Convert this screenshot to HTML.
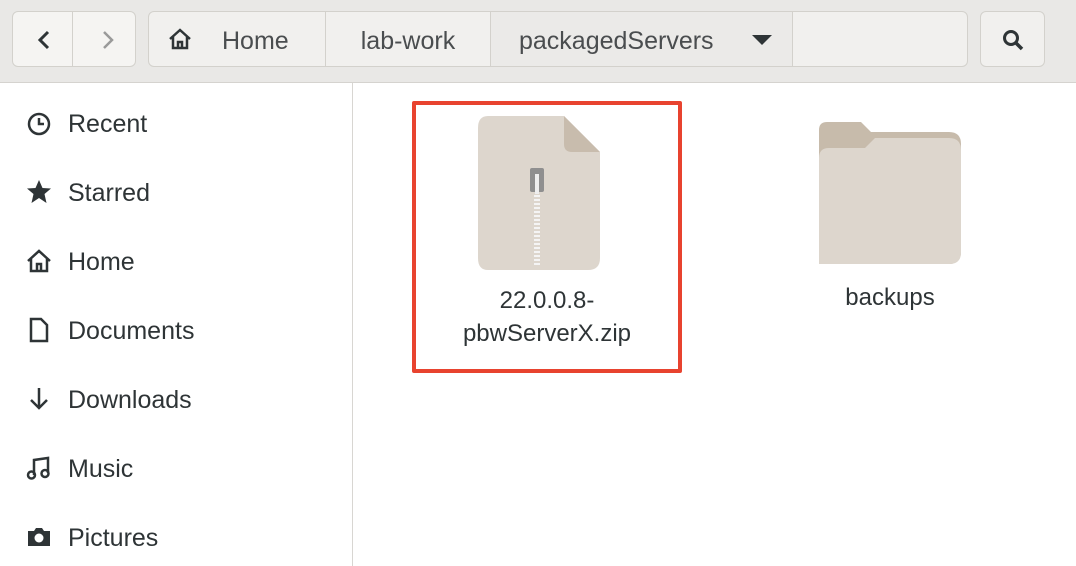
<!DOCTYPE html>
<html><head><style>
body{margin:0;width:1076px;height:566px;overflow:hidden;background:#fff;font-family:"Liberation Sans",sans-serif;color:#2e3436;position:relative}
.tb{position:absolute;left:0;top:0;width:1076px;height:82px;background:#e9e8e6;border-bottom:1px solid #d5d3cf}
.btn{position:absolute;top:11px;height:56px;border:1px solid #d3d1cc;background:#f1f0ee;box-sizing:border-box;border-radius:6px}
.seg{position:absolute;top:0;height:100%;border-right:1px solid #d3d1cc;box-sizing:border-box;font-size:25px;line-height:58px;color:#4a4d4f}
.side{position:absolute;left:0;top:83px;width:352px;height:483px;border-right:1px solid #d8d6d2}
.it{position:absolute;left:68px;font-size:25px;color:#2e3436}
.ic{position:absolute;left:26px}
.lbl{position:absolute;font-size:24px;color:#2e3436;text-align:center}
</style></head><body>
<div class="tb">
 <div class="btn" style="left:12px;width:124px;background:#f5f4f2">
  <div style="position:absolute;left:59px;top:0;width:1px;height:100%;background:#d3d1cc"></div>
  <svg style="position:absolute;left:20px;top:16px" width="24" height="24"><path d="M15 4 L7 12 L15 20" stroke="#2e3436" stroke-width="3" fill="none"/></svg>
  <svg style="position:absolute;left:82px;top:16px" width="24" height="24"><path d="M9 4 L17 12 L9 20" stroke="#9a9a9a" stroke-width="2.5" fill="none"/></svg>
 </div>
 <div class="btn" style="left:148px;width:820px">
  <div class="seg" style="left:0;width:177px"><svg style="position:absolute;left:18px;top:15px" width="26" height="24"><path d="M3 12 L13 3 L23 12 M6 10 V21 H20 V10 M11 21 V15 H15 V21" stroke="#2e3436" stroke-width="2.5" fill="none"/></svg><span style="position:absolute;left:73px">Home</span></div>
  <div class="seg" style="left:177px;width:165px;text-align:center">lab-work</div>
  <div class="seg" style="left:342px;width:302px;background:#ebeae8"><span style="position:absolute;left:28px">packagedServers</span><svg style="position:absolute;left:260px;top:22px" width="22" height="12"><path d="M1 1 L11 11 L21 1Z" fill="#2e3436"/></svg></div>
 </div>
 <div class="btn" style="left:980px;width:65px">
  <svg style="position:absolute;left:20px;top:16px" width="24" height="24"><circle cx="10" cy="10" r="6.5" stroke="#2e3436" stroke-width="3" fill="none"/><path d="M15 15 L21 21" stroke="#2e3436" stroke-width="3.5"/></svg>
 </div>
</div>
<div class="side">
 <svg class="ic" style="top:28px" width="26" height="26"><circle cx="13" cy="13" r="10" stroke="#2e3436" stroke-width="2.5" fill="none"/><path d="M13 7 V13 H18" stroke="#2e3436" stroke-width="2.5" fill="none"/></svg><div class="it" style="top:27px">Recent</div>
 <svg class="ic" style="top:96px" width="26" height="26"><path d="M13 1 L16.5 9 L25 9.5 L18.5 15 L20.5 24 L13 19 L5.5 24 L7.5 15 L1 9.5 L9.5 9Z" fill="#2e3436"/></svg><div class="it" style="top:96px">Starred</div>
 <svg class="ic" style="top:165px" width="26" height="26"><path d="M2 13 L13 3 L24 13 M5 11 V23 H21 V11 M11 23 V16 H15 V23" stroke="#2e3436" stroke-width="2.5" fill="none"/></svg><div class="it" style="top:165px">Home</div>
 <svg class="ic" style="top:234px" width="26" height="26"><path d="M5 2 H15 L21 8 V24 H5Z" stroke="#2e3436" stroke-width="2.5" fill="none"/></svg><div class="it" style="top:234px">Documents</div>
 <svg class="ic" style="top:303px" width="26" height="26"><path d="M13 2 V22 M5 14 L13 22 L21 14" stroke="#2e3436" stroke-width="2.5" fill="none"/></svg><div class="it" style="top:303px">Downloads</div>
 <svg class="ic" style="top:372px" width="26" height="26"><path d="M8 20 V5 L22 3 V18" stroke="#2e3436" stroke-width="2.5" fill="none"/><circle cx="5.5" cy="20" r="3.5" stroke="#2e3436" stroke-width="2.5" fill="none"/><circle cx="19" cy="18.5" r="3.5" stroke="#2e3436" stroke-width="2.5" fill="none"/></svg><div class="it" style="top:372px">Music</div>
 <svg class="ic" style="top:441px" width="26" height="26"><path d="M2 7 H8 L10 4 H16 L18 7 H24 V22 H2Z" fill="#2e3436"/><circle cx="13" cy="14" r="4.5" fill="#fff"/></svg><div class="it" style="top:441px">Pictures</div>
</div>
<div style="position:absolute;left:412px;top:101px;width:270px;height:272px;border:4px solid #e8432f;box-sizing:border-box;border-radius:2px"></div>
<svg style="position:absolute;left:476px;top:114px" width="126" height="158">
 <path d="M12 2 H88 L124 38 V144 Q124 156 112 156 H12 Q2 156 2 144 V14 Q2 2 12 2Z" fill="#ddd6cd"/>
 <path d="M88 2 L124 38 H96 Q88 38 88 30Z" fill="#c8bcad"/>
 <rect x="54" y="54" width="14" height="24" rx="2" fill="#8f8f8f"/>
 <rect x="59" y="60" width="4" height="20" fill="#eee"/>
 <path d="M58 82 H64 M58 86 H64 M58 90 H64 M58 94 H64 M58 98 H64 M58 102 H64 M58 106 H64 M58 110 H64 M58 114 H64 M58 118 H64 M58 122 H64 M58 126 H64 M58 130 H64 M58 134 H64 M58 138 H64 M58 142 H64 M58 146 H64 M58 150 H64" stroke="#f4f4f4" stroke-width="2"/>
</svg>
<div class="lbl" style="left:416px;top:284px;width:262px;line-height:33px">22.0.0.8-<br>pbwServerX.zip</div>
<svg style="position:absolute;left:817px;top:120px" width="146" height="146">
 <path d="M10 2 H44 L54 12 H132 Q144 12 144 24 V132 Q144 144 132 144 H4 Q2 144 2 132 V10 Q2 2 10 2Z" fill="#c7bbab"/>
 <path d="M2 38 Q2 28 12 28 H48 L58 18 H132 Q144 18 144 30 V132 Q144 144 132 144 H2Z" fill="#ddd6cd"/>
</svg>
<div class="lbl" style="left:790px;top:284px;width:200px">backups</div>
</body></html>
